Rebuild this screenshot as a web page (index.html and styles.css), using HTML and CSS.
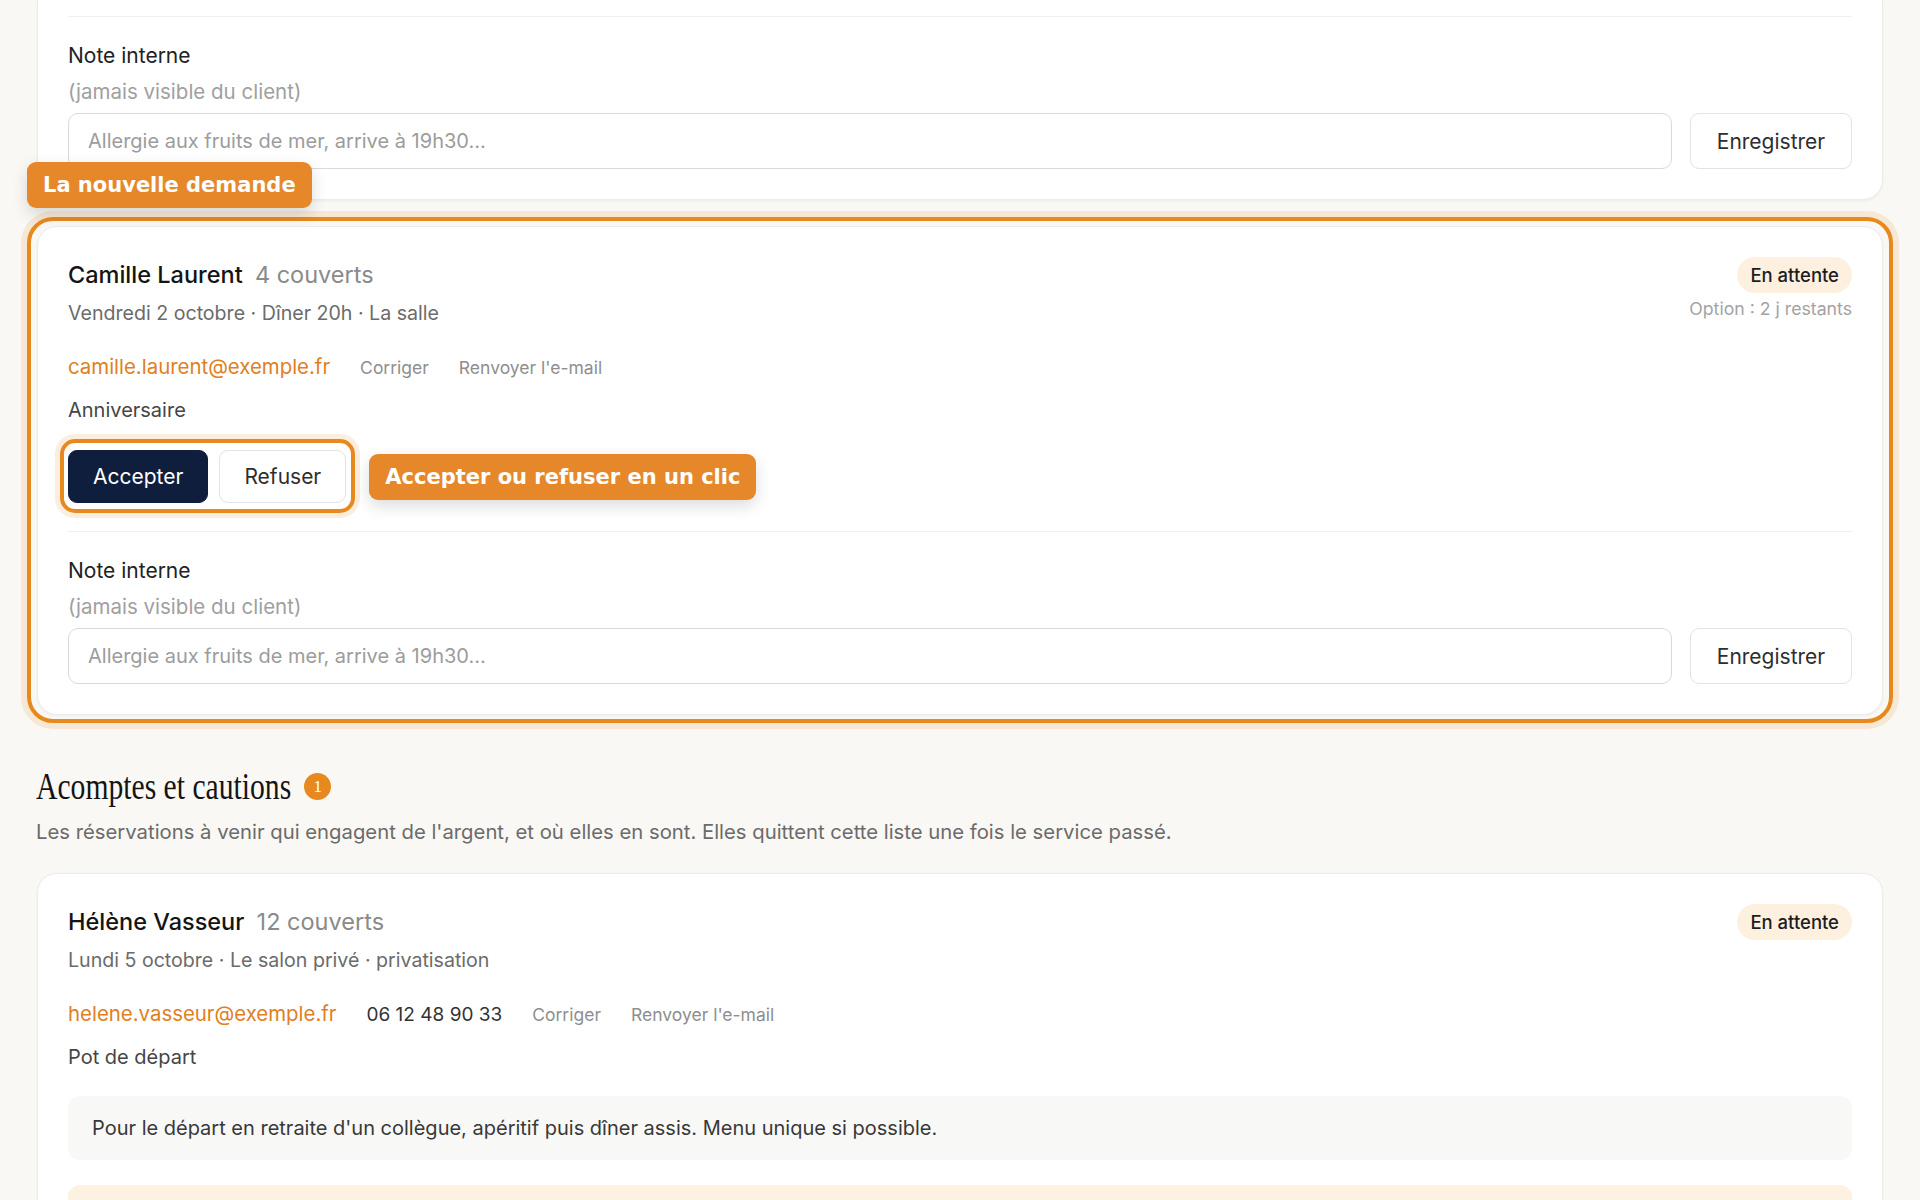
FILE: index.html
```html
<!DOCTYPE html>
<html lang="fr">
<head>
    <meta charset="UTF-8">
    <meta name="viewport" content="width=device-width, initial-scale=1.0">
    <title>Demandes et acomptes</title>
    <link rel="stylesheet" href="styles.css">
</head>
<body>

<main class="page">

    <!-- End of the previous booking, scrolled past -->
    <article class="card card-cut">
        <div class="note">
            <label class="note-label" for="note-prev">Note interne</label>
            <span class="note-hint">(jamais visible du client)</span>
            <div class="note-row">
                <input type="text" id="note-prev" class="note-input" placeholder="Allergie aux fruits de mer, arrive à 19h30…">
                <button class="btn">Enregistrer</button>
            </div>
        </div>
    </article>

    <div class="spotlight">
        <span class="callout callout-corner">La nouvelle demande</span>
        <article class="card">
            <header class="card-head">
                <div>
                    <h3 class="guest">Camille Laurent <span class="covers">4 couverts</span></h3>
                    <p class="when">Vendredi 2 octobre · Dîner 20h · La salle</p>
                </div>
                <div class="status">
                    <span class="pill">En attente</span>
                    <span class="option-left">Option : 2 j restants</span>
                </div>
            </header>
            <div class="contact">
                <a class="email" href="#">camille.laurent@exemple.fr</a>
                <button class="link-btn">Corriger</button>
                <button class="link-btn">Renvoyer l'e-mail</button>
            </div>
            <p class="occasion">Anniversaire</p>
            <div class="decision-row">
                <div class="decision">
                    <button class="btn btn-dark">Accepter</button>
                    <button class="btn">Refuser</button>
                </div>
                <span class="callout">Accepter ou refuser en un clic</span>
            </div>
            <div class="note">
                <label class="note-label" for="note-camille">Note interne</label>
                <span class="note-hint">(jamais visible du client)</span>
                <div class="note-row">
                    <input type="text" id="note-camille" class="note-input" placeholder="Allergie aux fruits de mer, arrive à 19h30…">
                    <button class="btn">Enregistrer</button>
                </div>
            </div>
        </article>
    </div>

    <section class="deposits">
        <h2 class="section-title"><span class="section-text">Acomptes et cautions</span><span class="count">1</span></h2>
        <p class="lede">Les réservations à venir qui engagent de l'argent, et où elles en sont. Elles quittent cette liste une fois le service passé.</p>

        <article class="card">
            <header class="card-head">
                <div>
                    <h3 class="guest">Hélène Vasseur <span class="covers">12 couverts</span></h3>
                    <p class="when">Lundi 5 octobre · Le salon privé · privatisation</p>
                </div>
                <div class="status">
                    <span class="pill">En attente</span>
                </div>
            </header>
            <div class="contact">
                <a class="email" href="#">helene.vasseur@exemple.fr</a>
                <span class="phone">06 12 48 90 33</span>
                <button class="link-btn">Corriger</button>
                <button class="link-btn">Renvoyer l'e-mail</button>
            </div>
            <p class="occasion">Pot de départ</p>
            <p class="message">Pour le départ en retraite d'un collègue, apéritif puis dîner assis. Menu unique si possible.</p>
            <div class="deposit-box"></div>
        </article>
    </section>

</main>

</body>
</html>
```

FILE: styles.css
```css
* {
    box-sizing: border-box;
}

html, body {
    margin: 0;
    background-color: #faf8f4;
    color: #1d1d1f;
    font-family: Inter, "Noto Sans", sans-serif;
}

.page {
    padding: 0 37px 40px;
    display: flex;
    flex-direction: column;
}

/* Cards */

.card {
    background: #fff;
    border: 1px solid #ececec;
    border-radius: 20px;
    padding: 30px 30px 30px;
    box-shadow: 0 1px 3px rgba(0, 0, 0, 0.05);
}

.card-cut {
    border-top: 0;
    border-radius: 0 0 20px 20px;
    padding-top: 16px;
}

.card-cut .note {
    margin-top: 0;
}

.spotlight {
    position: relative;
    margin-top: 26px;
}

/* orange ring drawn around the highlighted card */
.spotlight::before {
    content: "";
    position: absolute;
    inset: -9px -10px -8px;
    border: 4px solid #e8891f;
    border-radius: 26px;
    box-shadow: 0 0 0 6px rgba(232, 137, 31, 0.14);
    pointer-events: none;
}

.callout {
    display: inline-block;
    background: #e6882a;
    color: #fff;
    font-family: "DejaVu Sans", sans-serif;
    font-weight: bold;
    font-size: 21px;
    line-height: 26px;
    padding: 10px 16px;
    border-radius: 9px;
    box-shadow: 0 6px 16px rgba(0, 0, 0, 0.14);
    white-space: nowrap;
}

.callout-corner {
    position: absolute;
    left: -10px;
    top: -64px;
    z-index: 2;
}

/* Card header */

.card-head {
    display: flex;
    justify-content: space-between;
    align-items: flex-start;
}

.guest {
    margin: 0;
    font-size: 23.5px;
    font-weight: 500;
    line-height: 36px;
    color: #141414;
}

.covers {
    margin-left: 6px;
    font-weight: 400;
    color: #8a8a8a;
}

.when {
    margin: 6px 0 0;
    font-size: 19.6px;
    line-height: 28px;
    color: #6b6b6b;
}

.status {
    display: flex;
    flex-direction: column;
    align-items: flex-end;
}

.pill {
    display: inline-block;
    height: 36px;
    line-height: 36px;
    padding: 0 13px;
    border-radius: 18px;
    background: #fdf0df;
    font-size: 18.5px;
    font-weight: 500;
    color: #1d1d1f;
}

.option-left {
    margin-top: 4px;
    font-size: 17.7px;
    line-height: 24px;
    color: #a3a3a3;
}

/* Contact row */

.contact {
    display: flex;
    align-items: baseline;
    gap: 30px;
    margin-top: 26px;
    line-height: 28px;
}

.email {
    font-size: 20.4px;
    color: #e07f1f;
    text-decoration: none;
}

.phone {
    font-size: 19px;
    color: #333;
}

.link-btn {
    border: 0;
    background: none;
    padding: 0;
    font: inherit;
    font-size: 17.5px;
    color: #8e8e8e;
    cursor: pointer;
}

.occasion {
    margin: 14px 0 0;
    font-size: 20px;
    line-height: 28px;
    color: #454545;
}

/* Buttons */

.btn {
    height: 53px;
    padding: 0 24px;
    border: 1px solid #e3e3e3;
    border-radius: 9px;
    background: #fff;
    font-family: inherit;
    font-size: 21px;
    color: #2e2e2e;
    cursor: pointer;
}

.btn-dark {
    background: #0f1e3c;
    border-color: #0f1e3c;
    color: #fff;
}

.decision-row {
    display: flex;
    align-items: center;
    gap: 23px;
    margin-top: 26px;
}

.decision {
    position: relative;
    display: flex;
    gap: 11px;
}

.decision::before {
    content: "";
    position: absolute;
    inset: -11px -9px -10px -8px;
    border: 4px solid #e8891f;
    border-radius: 15px;
    box-shadow: 0 0 0 5px rgba(232, 137, 31, 0.14);
    pointer-events: none;
}

/* Internal note */

.note {
    margin-top: 28px;
    border-top: 1px solid #f0f0f0;
    padding-top: 25px;
    display: flex;
    flex-direction: column;
}

.note-label {
    font-size: 21px;
    line-height: 28px;
    color: #222;
}

.note-hint {
    margin-top: 8px;
    font-size: 20.5px;
    line-height: 28px;
    color: #a0a0a0;
}

.note-row {
    display: flex;
    gap: 18px;
    margin-top: 7px;
}

.note-input {
    flex: 1;
    height: 56px;
    padding: 0 19px;
    border: 1px solid #dadada;
    border-radius: 10px;
    font-family: inherit;
    font-size: 20px;
    color: #222;
    outline: none;
}

.note-input::placeholder {
    color: #9c9c9c;
}

.note-row .btn {
    height: 56px;
    width: 162px;
    padding: 0;
    font-size: 21px;
}

/* Deposits section */

.deposits {
    margin-top: 48px;
}

.section-title {
    display: flex;
    align-items: center;
    margin: 0 0 0 -1px;
    font-family: "Liberation Serif", serif;
    font-weight: 400;
    font-size: 38px;
    line-height: 46px;
    color: #141414;
}

.section-text {
    display: inline-block;
    transform: scaleX(0.78);
    transform-origin: 0 50%;
    margin-right: -72px;
}

.count {
    display: inline-flex;
    align-items: center;
    justify-content: center;
    width: 27px;
    height: 27px;
    margin-left: 13px;
    border-radius: 50%;
    background: #e8891f;
    color: #fff;
    font-size: 17px;
    line-height: 1;
}

.lede {
    margin: 9px 0 27px -1px;
    font-size: 20.3px;
    line-height: 28px;
    color: #6b6b6b;
}

.message {
    margin: 25px 0 0;
    padding: 18px 24px;
    border-radius: 12px;
    background: #f8f8f7;
    font-size: 20px;
    line-height: 28px;
    color: #383838;
}

.deposit-box {
    margin-top: 25px;
    height: 64px;
    border-radius: 12px;
    background: #fdf1e2;
}
```
